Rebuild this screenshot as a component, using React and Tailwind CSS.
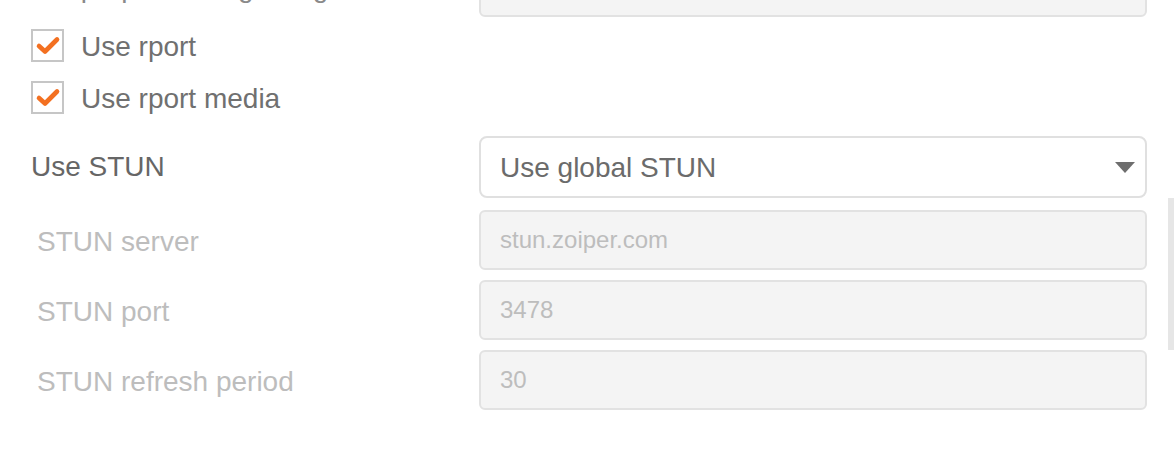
import React from "react";

function Check() {
  return (
    <div className="w-[33px] h-[33px] border-2 border-[#c6c6c6] bg-white flex items-center justify-center shrink-0">
      <svg width="26" height="22" viewBox="0 0 26 22">
        <path d="M4 12 L10 17.5 L22 5.5" fill="none" stroke="#f37021" strokeWidth="4.6" strokeLinecap="round" strokeLinejoin="round" />
      </svg>
    </div>
  );
}

function InputRow({ label, value }) {
  return (
    <div className="flex items-center h-[60px]">
      <div className="w-[448px] pl-[6px] pt-[4px] text-[28px] text-[#bdbdbd]">{label}</div>
      <div className="w-[668px] h-[60px] rounded-[6px] border-2 border-[#e2e2e2] bg-[#f4f4f4] flex items-center pl-[19px] text-[24px] text-[#bdbdbd]">
        {value}
      </div>
    </div>
  );
}

export default function App() {
  return (
    <div className="relative w-[1174px] h-[470px] overflow-hidden bg-white" style={{ fontFamily: '"Liberation Sans", Arial, sans-serif' }}>
      <div className="flex flex-col pl-[31px] mt-[-43px]">
        <div className="flex items-center h-[60px]">
          <div className="w-[448px] text-[28px] text-[#8a8a8a] pt-[2px]">Adapt rport for signaling</div>
          <div className="w-[668px] h-[60px] rounded-[6px] border-2 border-[#e2e2e2] bg-[#f4f4f4]"></div>
        </div>
        <div className="flex items-center gap-[17px] mt-[11px] h-[34px]">
          <Check />
          <span className="text-[28px] text-[#707070] pt-[3px]">Use rport</span>
        </div>
        <div className="flex items-center gap-[17px] mt-[18px] h-[34px]">
          <Check />
          <span className="text-[28px] text-[#707070] pt-[4px]">Use rport media</span>
        </div>
        <div className="flex items-center h-[62px] mt-[22px]">
          <div className="w-[448px] text-[28px] text-[#666666]">Use STUN</div>
          <div className="w-[668px] h-[62px] rounded-[8px] border-2 border-[#e0e0e0] bg-white flex items-center justify-between pl-[19px] pr-[10px] text-[28px] text-[#6b6b6b]">
            <span className="pt-[2px]">Use global STUN</span>
            <svg width="20" height="11" viewBox="0 0 20 11">
              <path d="M0 0 L20 0 L10 11 Z" fill="#6e6e6e" />
            </svg>
          </div>
        </div>
        <div className="flex flex-col gap-[10px] mt-[12px]">
          <InputRow label="STUN server" value="stun.zoiper.com" />
          <InputRow label="STUN port" value="3478" />
          <InputRow label="STUN refresh period" value="30" />
        </div>
      </div>
      <div className="absolute right-0 top-[198px] w-[6px] h-[152px] bg-[#e6e6e6]"></div>
    </div>
  );
}
